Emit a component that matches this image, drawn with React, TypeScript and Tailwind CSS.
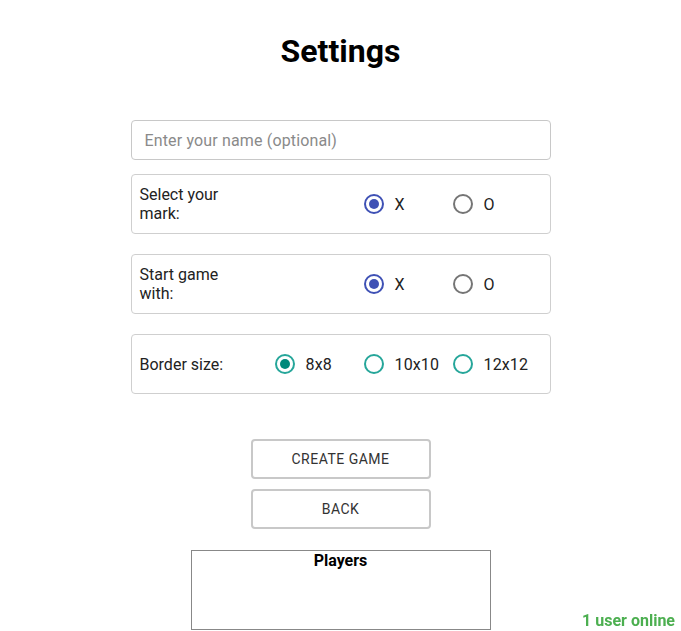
import React from "react";

function Radio({ checked, color }: { checked: boolean; color: "blue" | "teal" }) {
  const ring = color === "teal" ? "border-[#26a69a]" : checked ? "border-[#3f51b5]" : "border-[#757575]";
  const dot = color === "teal" ? "bg-[#00897b]" : "bg-[#3f51b5]";
  return (
    <span className={`flex h-[20px] w-[20px] items-center justify-center rounded-full border-2 ${ring}`}>
      {checked && <span className={`h-[10px] w-[10px] rounded-full ${dot}`} />}
    </span>
  );
}

function Option({ label, checked, color }: { label: string; checked: boolean; color: "blue" | "teal" }) {
  return (
    <div className="flex w-[89px] items-center gap-[11px]">
      <Radio checked={checked} color={color} />
      <span className="text-[16px] leading-[19px] tracking-[0.15px] text-[#222]">{label}</span>
    </div>
  );
}

function Group({ label, options, color }: { label: string; options: string[]; color: "blue" | "teal" }) {
  return (
    <div className="flex h-[60px] items-center justify-between rounded-[4px] border border-[#cfcfcf] pl-2 pr-2">
      <div className="w-[100px] text-[16px] leading-[19px] text-[#222]">{label}</div>
      <div className="flex">
        {options.map((o, i) => (
          <Option key={o} label={o} checked={i === 0} color={color} />
        ))}
      </div>
    </div>
  );
}

export default function App() {
  return (
    <div className="relative min-h-screen bg-white font-['Roboto',sans-serif]">
      <div className="flex flex-col items-center pt-[33px]">
        <h1 className="text-[32px] font-bold leading-[37px] text-black">Settings</h1>
        <div className="mt-[50px] flex w-[420px] flex-col">
          <input
            className="h-[40px] w-full rounded-[4px] border border-[#c8c8c8] pl-[13px] text-[16px] tracking-[0.15px] text-[#222] outline-none placeholder:text-[#8a8a8a]"
            placeholder="Enter your name (optional)"
          />
          <div className="mt-[14px] flex flex-col gap-[20px]">
            <Group label="Select your mark:" options={["X", "O"]} color="blue" />
            <Group label="Start game with:" options={["X", "O"]} color="blue" />
            <Group label="Border size:" options={["8x8", "10x10", "12x12"]} color="teal" />
          </div>
        </div>
        <div className="mt-[45px] flex flex-col gap-[10px]">
          <button className="h-[40px] w-[180px] rounded-[4px] border-2 border-[#c8c8c8] bg-white text-[14px] font-normal uppercase tracking-[0.5px] text-[#333]">
            Create Game
          </button>
          <button className="h-[40px] w-[180px] rounded-[4px] border-2 border-[#c8c8c8] bg-white text-[14px] font-normal uppercase tracking-[0.5px] text-[#333]">
            Back
          </button>
        </div>
        <div className="mt-[21px] h-[80px] w-[300px] border border-[#888]">
          <div className="text-center text-[16px] font-bold leading-[19px] text-black">Players</div>
        </div>
      </div>
      <div className="fixed bottom-[1px] right-[6px] text-[16px] font-bold leading-[19px] text-[#4caf50]">
        1 user online
      </div>
    </div>
  );
}
